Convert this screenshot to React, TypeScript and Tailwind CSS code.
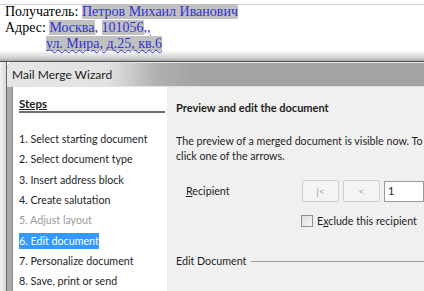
import React from "react";

const steps = [
  "1. Select starting document",
  "2. Select document type",
  "3. Insert address block",
  "4. Create salutation",
  "5. Adjust layout",
  "6. Edit document",
  "7. Personalize document",
  "8. Save, print or send",
];

export default function App() {
  return (
    <div className="w-[424px] h-[291px] overflow-hidden bg-white flex flex-col">
      {/* document behind the dialog */}
      <div className="h-[62px] shrink-0 flex flex-col bg-[linear-gradient(to_bottom,#ffffff_0px,#ffffff_50px,#d0d0d0_58px,#a8a8a8_61px)] border-b border-[#505050]">
        <div className="mt-[4px] border-t border-[#cfcfcf] pl-[5px] font-['Liberation_Serif',serif] text-[14px] leading-[16px] text-black">
          <div className="-mt-[1px] whitespace-nowrap">
            Получатель:{" "}
            <span className="bg-[#c0c0c0] text-[#3232d2]">Петров Михаил Иванович</span>
          </div>
          <div className="whitespace-nowrap">
            Адрес:{" "}
            <span className="bg-[#c0c0c0] text-[#3232d2]">Москва</span>
            <span className="text-[#3232d2]">, </span>
            <span className="bg-[#c0c0c0] text-[#3232d2]">101056</span>
            <span className="text-[#3232d2] underline decoration-wavy decoration-[#3232d2]">,,</span>
          </div>
          <div className="pl-[41px] whitespace-nowrap">
            <span className="bg-[#c0c0c0] text-[#3232d2] underline decoration-wavy decoration-[#3232d2] decoration-1">
              ул. Мира, д.25, кв.6
            </span>
          </div>
        </div>
      </div>

      {/* dialog window */}
      <div className="flex-1 flex font-['Lato',sans-serif]">
        <div className="w-[7px] shrink-0 bg-[linear-gradient(to_right,#f2f2f2,#d8d8d8)] border-r border-[#6a6a6a]" />
        <div className="flex-1 flex flex-col bg-[#a9a9a9] rounded-tl-[6px] border-t border-[#e8e8e8]">
          <div className="h-[24px] shrink-0 flex items-center pl-[5px] rounded-tl-[6px] bg-[linear-gradient(to_right,#e6e6e6_0px,#e2e2e2_100px,#b0b0b0_150px,#a3a3a3_190px)] border-b border-[#e2e2e2]">
            <span className="text-[12px] text-[#1e1e1e]">Mail Merge Wizard</span>
          </div>
          <div className="flex-1 flex pl-[5px]">
            {/* steps panel */}
            <div className="w-[155px] shrink-0 bg-white border-l border-[#8a8a8a] pl-[6px] pr-[2px] text-[10.7px] text-[#1e1e1e]">
              <div className="h-[26px] border-b-[2px] border-[#6e6e6e] flex items-end">
                <span className="font-bold underline leading-[14px] text-[11.5px]">Steps</span>
              </div>
              <div className="pt-[16px]">
                {steps.map((s, i) => (
                  <div key={s} className="h-[20.3px] flex items-center whitespace-nowrap">
                    <span
                      className={
                        i === 5
                          ? "bg-[#3399ff] text-white leading-[16px]"
                          : i === 4
                          ? "text-[#9a9a9a] leading-[16px]"
                          : "leading-[16px]"
                      }
                    >
                      {s}
                    </span>
                  </div>
                ))}
              </div>
            </div>

            {/* right panel */}
            <div className="flex-1 bg-[#f0f0f0] pl-[9px] text-[10.7px] text-[#1e1e1e] whitespace-nowrap">
              <div className="mt-[13px] font-bold leading-[15px] text-[11px]">Preview and edit the document</div>
              <div className="mt-[18px] leading-[15px]">
                <div>The preview of a merged document is visible now. To</div>
                <div>click one of the arrows.</div>
              </div>
              <div className="mt-[17px] flex items-center h-[22px]">
                <span className="w-[126px] pl-[10px]">
                  <span className="underline">R</span>ecipient
                </span>
                <button className="w-[37px] h-[22px] border border-[#cfcfcf] bg-[#f4f4f4] text-[#a0a0a0] text-[10px] rounded-[2px]">
                  |&lt;
                </button>
                <button className="ml-[4px] w-[37px] h-[22px] border border-[#cfcfcf] bg-[#f4f4f4] text-[#a0a0a0] text-[10px] rounded-[2px]">
                  &lt;
                </button>
                <div className="ml-[4px] w-[40px] h-[21px] border border-[#9a9a9a] bg-white flex items-center pl-[3px]">
                  <span className="text-[11px]">1</span>
                </div>
              </div>
              <div className="mt-[11px] flex items-center pl-[125px]">
                <span className="w-[12px] h-[12px] border border-[#8e8f8f] bg-[linear-gradient(135deg,#dcdcdc,#f8f8f8)]" />
                <span className="ml-[4px]">
                  E<span className="underline">x</span>clude this recipient
                </span>
              </div>
              <div className="mt-[24px] flex items-center">
                <span>Edit Document</span>
                <div className="ml-[5px] flex-1 border-t border-[#a0a0a0]" />
              </div>
            </div>
          </div>
        </div>
      </div>
    </div>
  );
}
